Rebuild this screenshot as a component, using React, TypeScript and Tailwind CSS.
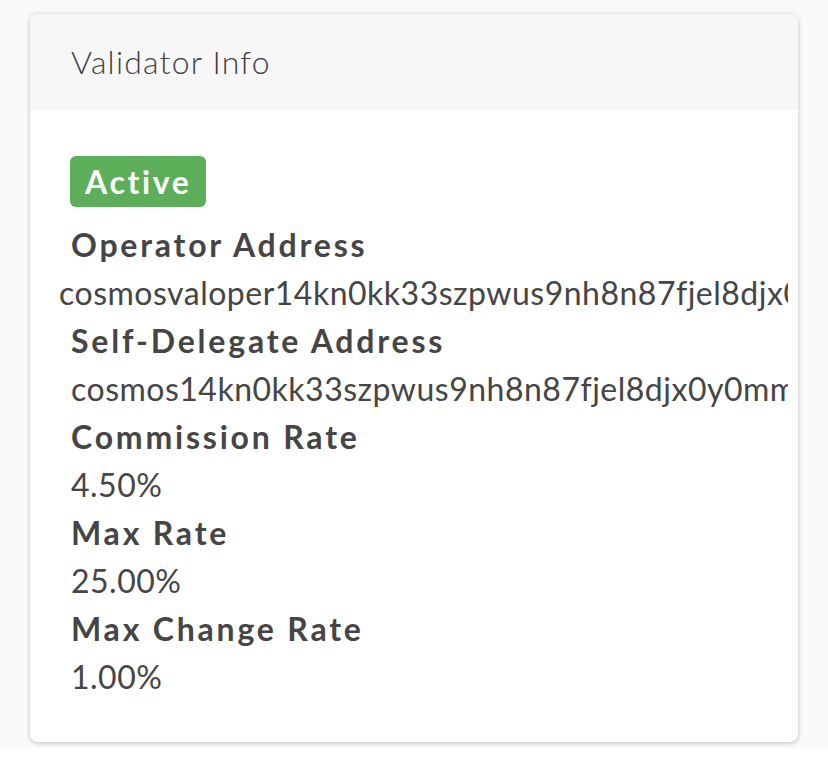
const rows: { label: string; value: string; shift?: boolean }[] = [
  { label: 'Operator Address', value: 'cosmosvaloper14kn0kk33szpwus9nh8n87fjel8djx0y070ymmj', shift: true },
  { label: 'Self-Delegate Address', value: 'cosmos14kn0kk33szpwus9nh8n87fjel8djx0y0mmswhp' },
  { label: 'Commission Rate', value: '4.50%' },
  { label: 'Max Rate', value: '25.00%' },
  { label: 'Max Change Rate', value: '1.00%' },
]

export default function App() {
  return (
    <div className="min-h-[762px] bg-white font-['Lato',sans-serif] text-[#454545]">
      <div className="h-[748px] bg-[#fafafa] pt-[14px] pl-[30px] pr-[30px]">
        <div className="w-[768px] rounded-[8px] bg-white shadow-[0_1px_5px_rgba(0,0,0,0.25)] overflow-hidden">
          <div className="h-[96px] bg-[#f7f7f7] pl-[41px] flex items-center">
            <h2 className="text-[32px] font-light tracking-[1.2px] text-[#404040]">Validator Info</h2>
          </div>
          <div className="pl-[10px] pr-[10px] pt-[46px] pb-[41px]">
            <div className="overflow-hidden pl-[30px]">
              <span className="inline-block rounded-[6px] bg-[#5cae58] px-[15px] h-[51px] leading-[51px] text-[32px] font-bold tracking-[2.6px] text-white">
                Active
              </span>
              <div className="mt-[14px]">
                {rows.map(r => (
                  <div key={r.label}>
                    <div className="text-[32px] leading-[48px] font-bold tracking-[2.8px] pl-[1px] text-[#454545]">{r.label}</div>
                    <div className={`text-[32px] leading-[48px] tracking-[0.5px] whitespace-nowrap text-[#454545] ${r.shift ? '-ml-[11px]' : 'pl-[1px]'}`}>
                      {r.value}
                    </div>
                  </div>
                ))}
              </div>
            </div>
          </div>
        </div>
      </div>
    </div>
  )
}
